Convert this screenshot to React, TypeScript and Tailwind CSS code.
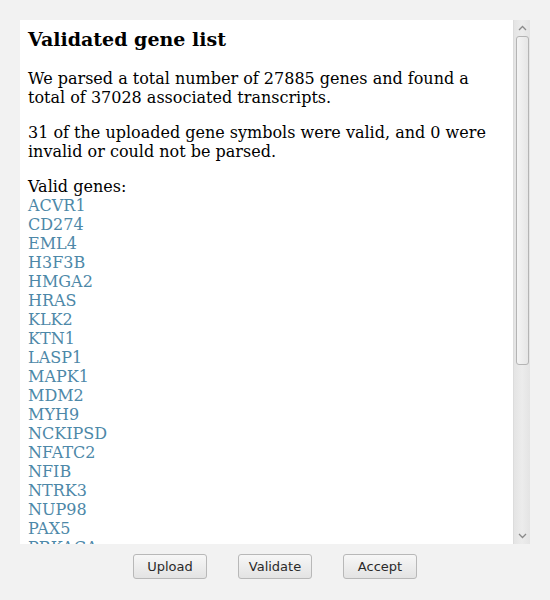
import React from "react";

const genes = [
  "ACVR1","CD274","EML4","H3F3B","HMGA2","HRAS","KLK2","KTN1","LASP1","MAPK1","MDM2","MYH9","NCKIPSD","NFATC2","NFIB","NTRK3","NUP98","PAX5","PRKACA",
];

export default function App() {
  return (
    <div className="w-[550px] h-[600px] bg-[#f2f2f2] flex flex-col overflow-hidden">
      <div className="mt-[20px] ml-[20px] w-[510px] h-[524px] flex bg-white">
        <div
          className="flex-1 overflow-hidden px-[8px] pt-[8px] text-black text-[16px] leading-[19px]"
          style={{ fontFamily: '"DejaVu Serif", serif' }}
        >
          <h3 className="text-[19px] font-bold leading-[22px] mb-[19px]">Validated gene list</h3>
          <p className="mb-[16px]">We parsed a total number of 27885 genes and found a total of 37028 associated transcripts.</p>
          <p className="mb-[16px]">31 of the uploaded gene symbols were valid, and 0 were invalid or could not be parsed.</p>
          <p>Valid genes:</p>
          {genes.map((g) => (
            <div key={g} className="text-[#4d88a8]">{g}</div>
          ))}
        </div>
        <div className="w-[17px] h-full bg-gradient-to-r from-[#e4e4e4] via-[#ececec] to-[#e4e4e4] border-l border-[#dcdcdc] flex flex-col items-center">
          <div className="h-[16px] w-full flex items-center justify-center">
            <svg width="9" height="6" viewBox="0 0 9 6"><path d="M1 5 L4.5 1.5 L8 5" fill="none" stroke="#8a8a8a" strokeWidth="1.3" /></svg>
          </div>
          <div className="w-[13px] h-[329px] rounded-[3px] border border-[#b4b4b4] bg-gradient-to-r from-[#f4f4f4] to-[#e6e6e6]" />
          <div className="flex-1" />
          <div className="h-[16px] w-full flex items-center justify-center">
            <svg width="9" height="6" viewBox="0 0 9 6"><path d="M1 1 L4.5 4.5 L8 1" fill="none" stroke="#8a8a8a" strokeWidth="1.3" /></svg>
          </div>
        </div>
      </div>
      <div className="flex justify-center gap-[31px] mt-[10px]" style={{ fontFamily: '"DejaVu Sans", sans-serif' }}>
        {["Upload", "Validate", "Accept"].map((b) => (
          <button
            key={b}
            className="w-[74px] h-[25px] rounded-[3px] border border-[#b8b8b8] bg-gradient-to-b from-[#f7f7f7] to-[#e3e3e3] text-[13px] text-[#2a2a2a] flex items-center justify-center"
          >
            {b}
          </button>
        ))}
      </div>
    </div>
  );
}
